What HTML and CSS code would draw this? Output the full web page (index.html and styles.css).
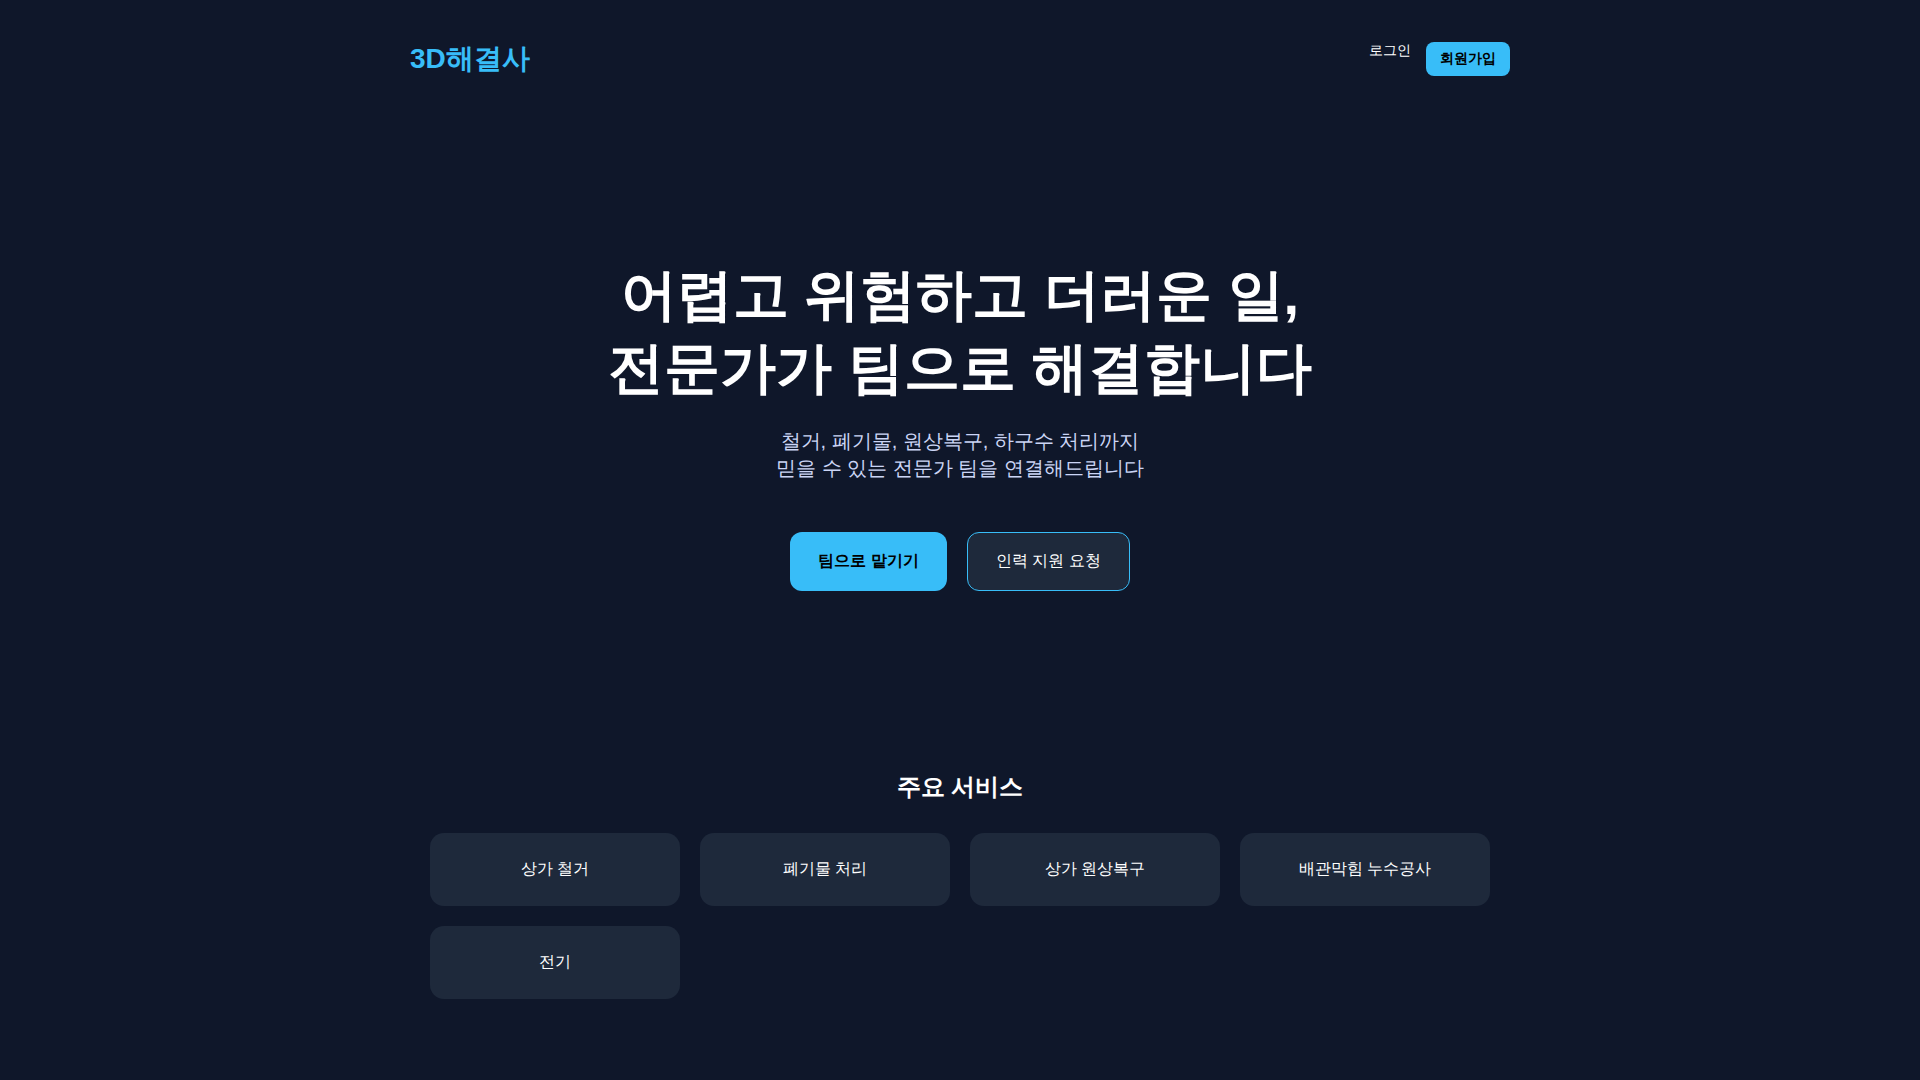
FILE: index.html
```html
<!DOCTYPE html>
<html lang="ko">
<head>
<meta charset="utf-8">
<title>3D해결사</title>
<link rel="stylesheet" href="styles.css">
</head>
<body>
<header class="header">
  <a class="logo" href="#">3D해결사</a>
  <nav class="nav">
    <a class="login" href="#">로그인</a>
    <a class="signup" href="#">회원가입</a>
  </nav>
</header>
<main>
  <section class="hero">
    <h1>어렵고 위험하고 더러운 일,<br>전문가가 팀으로 해결합니다</h1>
    <p>철거, 폐기물, 원상복구, 하구수 처리까지<br>믿을 수 있는 전문가 팀을 연결해드립니다</p>
    <div class="actions">
      <button class="btn primary" type="button">팀으로 맡기기</button>
      <button class="btn secondary" type="button">인력 지원 요청</button>
    </div>
  </section>
  <section class="services">
    <h2>주요 서비스</h2>
    <div class="grid">
      <div class="card">상가 철거</div>
      <div class="card">폐기물 처리</div>
      <div class="card">상가 원상복구</div>
      <div class="card">배관막힘 누수공사</div>
      <div class="card">전기</div>
    </div>
  </section>
</main>
</body>
</html>
```

FILE: styles.css
```css
* {
  box-sizing: border-box;
}

body {
  margin: 0;
  background: #0f172a;
  color: #fff;
  font-family: "Liberation Sans", sans-serif;
}

a {
  color: inherit;
  text-decoration: none;
}

.header {
  display: flex;
  justify-content: space-between;
  align-items: center;
  max-width: 1100px;
  margin: 0 auto;
  padding: 40px 0;
}

.logo {
  color: #38bdf8;
  font-size: 28px;
  font-weight: 700;
}

.nav {
  display: flex;
  gap: 15px;
  font-size: 14px;
}

.signup {
  padding: 8px 14px;
  border-radius: 8px;
  background: #38bdf8;
  color: #000;
  font-weight: 700;
}

.hero {
  padding: 140px 20px;
  text-align: center;
}

h1 {
  margin: 0 0 24px;
  font-size: 56px;
  line-height: 73px;
}

.hero p {
  margin: 0 0 50px;
  color: #cbd5f5;
  font-size: 20px;
}

.actions {
  display: flex;
  justify-content: center;
  gap: 20px;
}

.btn {
  padding: 18px 28px;
  border: 0;
  border-radius: 12px;
  font-family: inherit;
  font-size: 16px;
}

.primary {
  background: #38bdf8;
  color: #000;
  font-weight: 700;
}

.secondary {
  border: 1px solid #38bdf8;
  background: #1e293b;
  color: #fff;
}

.services {
  max-width: 1100px;
  margin: 0 auto;
  padding: 40px 20px;
}

h2 {
  margin: 0 0 30px;
  font-size: 24px;
  text-align: center;
}

.grid {
  display: grid;
  grid-template-columns: repeat(4, 1fr);
  gap: 20px;
}

.card {
  padding: 26px;
  border-radius: 14px;
  background: #1e293b;
  text-align: center;
}
```
